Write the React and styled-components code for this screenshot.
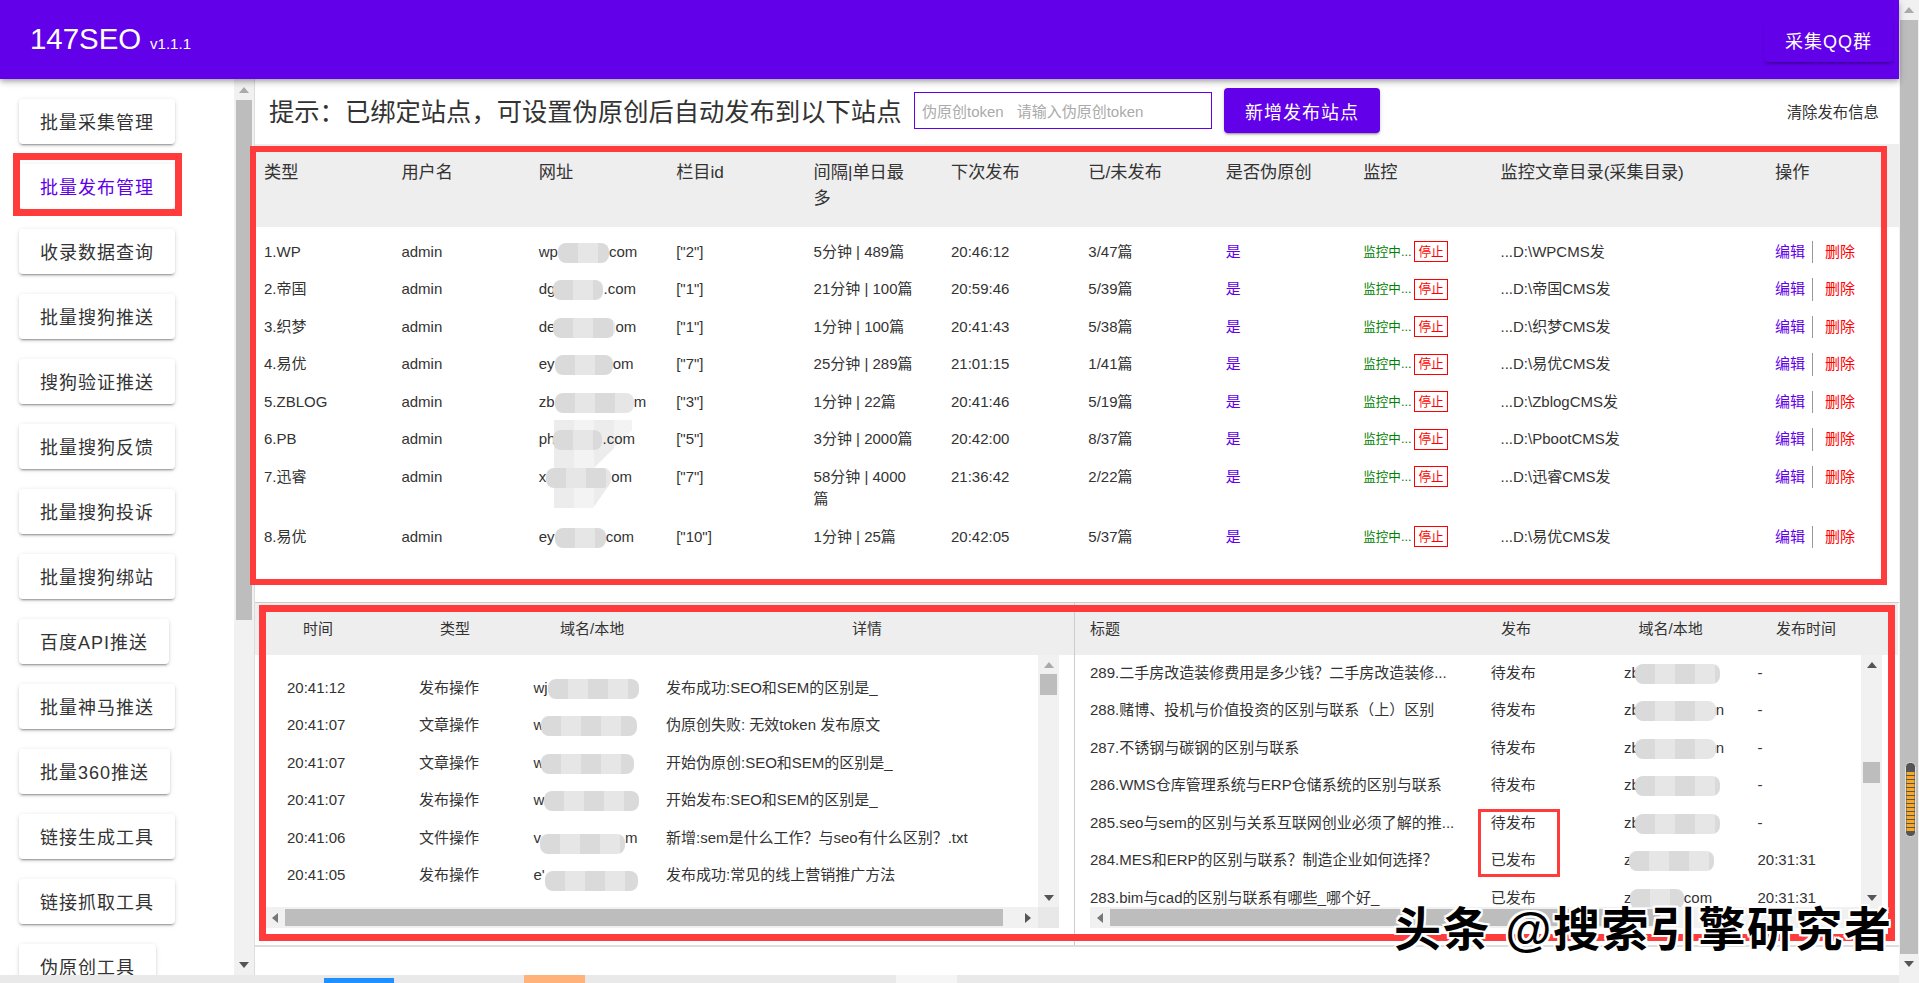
import React from "react";
import styled, { createGlobalStyle } from "styled-components";

const PURPLE = "#6200ea";
const RED = "#ff3b3b";
const TEXT = "#333";
const THUMB = "#bdbdbd";
const TRACK = "#f1f1f1";
const SITE_COLS = "repeat(9, 137.4px) 274.5px 1fr";

const Global = createGlobalStyle`
  html, body { margin: 0; padding: 0; height: 100%; overflow: hidden; background: #fff; }
  body { font-family: "Liberation Sans", "Noto Sans CJK SC", sans-serif; color: ${TEXT}; }
  * { box-sizing: border-box; }
`;

const Shell = styled.div`
  position: relative;
  display: flex;
  width: 1919px;
  height: 983px;
  overflow: hidden;
`;
const Page = styled.div`
  display: flex;
  flex-direction: column;
  width: 1899px;
  height: 983px;
`;
const Header = styled.header`
  position: relative;
  z-index: 3;
  display: flex;
  align-items: flex-start;
  justify-content: space-between;
  flex: none;
  height: 79px;
  padding: 20px 6px 0 30px;
  background: ${PURPLE};
  color: #fff;
  box-shadow: 0 2px 4px -1px rgba(0,0,0,.2), 0 4px 5px rgba(0,0,0,.14), 0 1px 10px rgba(0,0,0,.12);
`;
const Brand = styled.div`
  font-size: 29.4px;
  line-height: 38px;
`;
const Version = styled.small`
  margin-left: 9px;
  font-size: 15px;
`;
const QQButton = styled.div`
  display: flex;
  align-items: center;
  height: 42px;
  padding: 0 21px 3px;
  border-radius: 4px;
  font-size: 18px;
  letter-spacing: 1px;
  white-space: nowrap;
  box-shadow: 0 3px 3px -2px rgba(0,0,0,.3), 0 2px 3px rgba(0,0,0,.14);
`;
const Body = styled.div`
  display: flex;
  flex: none;
  height: 896px;
`;
const Sidebar = styled.nav`
  display: flex;
  flex: none;
  width: 255px;
  border-right: 1px solid #ddd;
`;
const SideList = styled.div`
  display: flex;
  flex-direction: column;
  align-items: flex-start;
  gap: 20px;
  width: 234px;
  padding: 20px 0 0 19px;
  overflow: hidden;
`;
const SideButton = styled.div`
  position: relative;
  flex: none;
  display: flex;
  align-items: center;
  height: 45px;
  padding: 0 21px 2px;
  border-radius: 4px;
  background: #fff;
  color: ${p => (p.$active ? PURPLE : TEXT)};
  font-size: 18px;
  letter-spacing: 1px;
  white-space: nowrap;
  box-shadow: 0 3px 1px -2px rgba(0,0,0,.2), 0 2px 2px rgba(0,0,0,.14), 0 1px 5px rgba(0,0,0,.12);
`;
const SideFrame = styled.span`
  position: absolute;
  inset: -11px -7px -7px -6px;
  border: 7px solid ${RED};
`;
const VBar = styled.div`
  display: flex;
  flex-direction: column;
  flex: none;
  width: ${p => p.$w || 20}px;
  background: ${TRACK};
`;
const ArrowBox = styled.div`
  display: flex;
  align-items: center;
  justify-content: center;
  flex: none;
  height: ${p => p.$h || 21}px;
`;
const ArrowUp = styled.i`
  width: 0; height: 0;
  border-left: 5px solid transparent;
  border-right: 5px solid transparent;
  border-bottom: 6px solid ${p => p.$c || "#666"};
`;
const ArrowDown = styled(ArrowUp)`
  border-bottom: 0;
  border-top: 6px solid ${p => p.$c || "#666"};
`;
const ArrowLeft = styled.i`
  width: 0; height: 0;
  border-top: 5px solid transparent;
  border-bottom: 5px solid transparent;
  border-right: 6px solid #777;
`;
const ArrowRight = styled.i`
  width: 0; height: 0;
  border-top: 5px solid transparent;
  border-bottom: 5px solid transparent;
  border-left: 6px solid #555;
`;
const VThumb = styled.div`
  flex: none;
  height: ${p => p.$h}px;
  margin: ${p => p.$top || 0}px ${p => p.$side || 2}px 0;
  background: ${THUMB};
`;
const VSpacer = styled.div`
  flex: 1;
`;
const Main = styled.main`
  position: relative;
  display: flex;
  flex-direction: column;
  flex: 1;
  min-width: 0;
`;
const Toolbar = styled.div`
  display: flex;
  align-items: center;
  flex: none;
  height: 67px;
  padding: 0 20px 2px 14px;
  border-bottom: 2px solid #eee;
`;
const Hint = styled.h2`
  margin: 0;
  width: 645px;
  font-size: 25.3px;
  font-weight: 400;
  line-height: 36px;
  white-space: nowrap;
  transform: translateY(1px);
`;
const TokenBox = styled.div`
  display: flex;
  align-items: center;
  gap: 13px;
  width: 298px;
  height: 37px;
  padding-left: 7px;
  border: 1px solid ${PURPLE};
  color: #aaa;
  font-size: 15px;
  white-space: nowrap;
`;
const AddButton = styled.div`
  display: flex;
  align-items: center;
  height: 45px;
  margin-left: 12px;
  padding: 0 21px;
  border-radius: 4px;
  background: ${PURPLE};
  color: #fff;
  font-size: 18px;
  letter-spacing: 1px;
  white-space: nowrap;
  box-shadow: 0 3px 1px -2px rgba(0,0,0,.2), 0 2px 2px rgba(0,0,0,.14), 0 1px 5px rgba(0,0,0,.12);
`;
const ClearLink = styled.div`
  margin-left: auto;
  font-size: 15.4px;
  white-space: nowrap;
`;
const SiteSection = styled.section`
  position: relative;
  flex: none;
  height: 456px;
  margin-left: 1px;
`;
const TableFrame = styled.div`
  position: absolute;
  z-index: 2;
  left: -6px;
  top: 0;
  width: 1637px;
  height: 439px;
  border: 6.5px solid ${RED};
  pointer-events: none;
`;
const SiteHead = styled.div`
  display: grid;
  grid-template-columns: ${SITE_COLS};
  height: 81px;
  padding: 13px 0 0 8px;
  background: #eee;
  font-size: 17.2px;
  line-height: 26px;
`;
const SiteRows = styled.div`
  position: relative;
  padding-top: 6px;
`;
const SiteRow = styled.div`
  position: relative;
  display: grid;
  grid-template-columns: ${SITE_COLS};
  padding: 7.5px 0 7.5px 8px;
  font-size: 15px;
  line-height: 22.5px;
`;
const Cell = styled.div`
  padding-right: 33.4px;
  white-space: ${p => (p.$wrap ? "normal" : "nowrap")};
`;
const Yes = styled.span`
  color: ${PURPLE};
`;
const Monitor = styled.div`
  display: flex;
  align-items: center;
  align-self: start;
  gap: 3px;
  height: 22.5px;
  color: #008000;
  font-size: 12.6px;
  white-space: nowrap;
`;
const StopBtn = styled.span`
  display: inline-flex;
  align-items: center;
  height: 21px;
  padding: 0 3px;
  border: 1px solid #f00;
  color: #f00;
  font-size: 12.6px;
`;
const Actions = styled.div`
  display: flex;
  align-items: center;
  height: 22.5px;
`;
const EditLink = styled.span`
  color: ${PURPLE};
  padding-right: 7px;
  border-right: 1px solid #999;
`;
const DeleteLink = styled.span`
  margin-left: 12px;
  color: #f00;
`;
const Blot = styled.span`
  display: inline-block;
  vertical-align: middle;
  width: ${p => p.$w}px;
  height: 20px;
  margin: -9px 0 -9px ${p => p.$ml || 0}px;
  border-radius: 8px;
  transform: translateY(${p => p.$dy || 0}px);
  background: repeating-linear-gradient(90deg, #dadada 0 20px, #e6e6e6 20px 40px);
`;
const Ghost = styled.div`
  position: absolute;
  left: 298px;
  top: 193px;
  width: 78px;
  height: 88px;
  background: repeating-linear-gradient(90deg, #ececec 0 20px, #f3f3f3 20px 40px);
  clip-path: polygon(0 0, 100% 0, 100% 12%, 45% 60%, 70% 75%, 50% 100%, 0 100%);
`;
const LogPanel = styled.section`
  position: relative;
  display: flex;
  flex: none;
  height: 345px;
  border-top: 1px solid #ccc;
  border-bottom: 2px solid #ddd;
`;
const LogFrame = styled.div`
  position: absolute;
  z-index: 2;
  left: 4px;
  top: 2px;
  width: 1636px;
  height: 336px;
  border: 7px solid ${RED};
  pointer-events: none;
`;
const Pane = styled.div`
  display: flex;
  flex-direction: column;
  flex: none;
  width: ${p => p.$w}px;
  border-right: ${p => (p.$rule ? "1px solid #ccc" : "0")};
`;
const PaneHead = styled.div`
  display: grid;
  grid-template-columns: ${p => p.$cols};
  align-items: center;
  flex: none;
  height: 52px;
  padding: 0 0 4px ${p => p.$pad}px;
  background: #eee;
  font-size: 15px;
`;
const PaneBody = styled.div`
  display: flex;
  flex: none;
  height: 252px;
  margin: 0 ${p => p.$mr}px 0 ${p => p.$ml}px;
  background: #fff;
`;
const RowList = styled.div`
  position: relative;
  flex: 1;
  min-width: 0;
  padding-top: ${p => p.$top}px;
  padding-left: ${p => p.$pad}px;
  overflow: hidden;
`;
const LogRow = styled.div`
  display: grid;
  grid-template-columns: ${p => p.$cols};
  align-items: center;
  height: 37.5px;
  padding-bottom: 2px;
  font-size: 15px;
  line-height: 22.5px;
  white-space: nowrap;
`;
const HBar = styled.div`
  display: flex;
  align-items: stretch;
  flex: none;
  height: 21px;
  margin: 0 ${p => p.$mr}px 0 ${p => p.$ml}px;
  background: ${TRACK};
`;
const HArrow = styled.div`
  display: flex;
  align-items: center;
  justify-content: center;
  flex: none;
  width: 20px;
`;
const HThumb = styled.div`
  flex: none;
  width: ${p => p.$w}px;
  margin: 2px 0;
  background: ${THUMB};
`;
const HSpacer = styled.div`
  flex: 1;
`;
const Corner = styled.div`
  flex: none;
  width: 21px;
  background: #e8e8e8;
`;
const StatusFrame = styled.div`
  position: absolute;
  left: 403px;
  top: 154px;
  width: 82px;
  height: 68px;
  border: 3px solid ${RED};
`;
const TaskStrip = styled.div`
  display: flex;
  align-items: flex-end;
  flex: none;
  height: 8px;
  background: #e9e9e9;
`;
const StripPart = styled.span`
  flex: none;
  width: ${p => p.$w}px;
  height: ${p => p.$h}px;
  margin-left: ${p => p.$ml}px;
  background: ${p => p.$c};
`;
const PageBar = styled.aside`
  position: relative;
  display: flex;
  flex-direction: column;
  flex: none;
  width: 20px;
  height: 983px;
  background: ${TRACK};
`;
const Grip = styled.svg`
  position: absolute;
  left: 6px;
  top: 762px;
`;
const Watermark = styled.div`
  position: absolute;
  z-index: 5;
  left: 1394px;
  top: 900px;
  color: #000;
  font-size: 47px;
  letter-spacing: 1.5px;
  line-height: 60px;
  font-weight: 700;
  white-space: nowrap;
  text-shadow: 2px 0 0 #fff, -2px 0 0 #fff, 0 2px 0 #fff, 0 -2px 0 #fff, 2px 2px 0 #fff, -2px -2px 0 #fff, 2px -2px 0 #fff, -2px 2px 0 #fff;
`;

const menu = ["批量采集管理","批量发布管理","收录数据查询","批量搜狗推送","搜狗验证推送","批量搜狗反馈","批量搜狗投诉","批量搜狗绑站","百度API推送","批量神马推送","批量360推送","链接生成工具","链接抓取工具","伪原创工具"];
const siteHead = ["类型","用户名","网址","栏目id","间隔|单日最多","下次发布","已/未发布","是否伪原创","监控","监控文章目录(采集目录)","操作"];
const sites = [
  ["1.WP","wp",0,51,"com",'["2"]',"5分钟 | 489篇","20:46:12","3/47篇","...D:\\WPCMS发"],
  ["2.帝国","dg",-2,50,".com",'["1"]',"21分钟 | 100篇","20:59:46","5/39篇","...D:\\帝国CMS发"],
  ["3.织梦","de",-2,62,"om",'["1"]',"1分钟 | 100篇","20:41:43","5/38篇","...D:\\织梦CMS发"],
  ["4.易优","ey",0,58,"om",'["7"]',"25分钟 | 289篇","21:01:15","1/41篇","...D:\\易优CMS发"],
  ["5.ZBLOG","zb",0,79,"m",'["3"]',"1分钟 | 22篇","20:41:46","5/19篇","...D:\\ZblogCMS发"],
  ["6.PB","ph",-2,49,".com",'["5"]',"3分钟 | 2000篇","20:42:00","8/37篇","...D:\\PbootCMS发"],
  ["7.迅睿","x",0,65,"om",'["7"]',"58分钟 | 4000篇","21:36:42","2/22篇","...D:\\迅睿CMS发"],
  ["8.易优","ey",0,51,"com",'["10"]',"1分钟 | 25篇","20:42:05","5/37篇","...D:\\易优CMS发"],
];
const leftCols = "132px 114.5px 132.5px 1fr";
const leftHeadCols = "137px 120px 292px 1fr";
const logs = [
  ["20:41:12","发布操作","wj",0,91,"",0,"发布成功:SEO和SEM的区别是_"],
  ["20:41:07","文章操作","w",-3,96,"",0,"伪原创失败: 无效token 发布原文"],
  ["20:41:07","文章操作","w",-3,93,"",0,"开始伪原创:SEO和SEM的区别是_"],
  ["20:41:07","发布操作","w",0,95,"",0,"开始发布:SEO和SEM的区别是_"],
  ["20:41:06","文件操作","v",-1,85,"m",5,"新增:sem是什么工作？与seo有什么区别？.txt"],
  ["20:41:05","发布操作","e'",0,93,"",5,"发布成功:常见的线上营销推广方法"],
];
const rightCols = "400.7px 133.3px 133.5px 1fr";
const rightHeadCols = "411px 137.5px 137.5px 1fr";
const posts = [
  ["289.二手房改造装修费用是多少钱？二手房改造装修...","待发布","zb",85,"","-"],
  ["288.赌博、投机与价值投资的区别与联系（上）区别","待发布","zb",81,"n","-"],
  ["287.不锈钢与碳钢的区别与联系","待发布","zb",81,"n","-"],
  ["286.WMS仓库管理系统与ERP仓储系统的区别与联系","待发布","zb",85,"","-"],
  ["285.seo与sem的区别与关系互联网创业必须了解的推...","待发布","zb",85,"","-"],
  ["284.MES和ERP的区别与联系？制造企业如何选择？","已发布","z'",85,"","20:31:31"],
  ["283.bim与cad的区别与联系有哪些_哪个好_","已发布","zl",54,"com","20:31:31"],
];

function Stripes() {
  const ys = Array.from({ length: 15 }, (_, i) => 10 + i * 4);
  return (
    <Grip width="11" height="75" viewBox="0 0 11 75">
      <rect x="0.5" y="0.5" width="10" height="74" rx="4" fill="#555" stroke="#ddd" />
      {ys.map(y => <rect key={y} x="1.5" y={y} width="8" height="3" fill="#f9a825" />)}
    </Grip>
  );
}

export default function App() {
  return (
    <Shell>
      <Global />
      <Page>
        <Header>
          <Brand>147SEO<Version>v1.1.1</Version></Brand>
          <QQButton>采集QQ群</QQButton>
        </Header>
        <Body>
          <Sidebar>
            <SideList>
              {menu.map((m, i) => (
                <SideButton key={m} $active={i === 1}>{m}{i === 1 && <SideFrame />}</SideButton>
              ))}
            </SideList>
            <VBar>
              <ArrowBox><ArrowUp $c="#aaa" /></ArrowBox>
              <VThumb $h={520} />
              <VSpacer />
              <ArrowBox><ArrowDown $c="#555" /></ArrowBox>
            </VBar>
          </Sidebar>
          <Main>
            <Toolbar>
              <Hint>提示：已绑定站点，可设置伪原创后自动发布到以下站点</Hint>
              <TokenBox><span>伪原创token</span><span>请输入伪原创token</span></TokenBox>
              <AddButton>新增发布站点</AddButton>
              <ClearLink>清除发布信息</ClearLink>
            </Toolbar>
            <SiteSection>
              <TableFrame />
              <SiteHead>
                {siteHead.map(h => <Cell key={h} $wrap>{h}</Cell>)}
              </SiteHead>
              <SiteRows>
                <Ghost />
                {sites.map(s => (
                  <SiteRow key={s[0]}>
                    <Cell>{s[0]}</Cell>
                    <Cell>admin</Cell>
                    <Cell>{s[1]}<Blot $ml={s[2]} $w={s[3]} />{s[4]}</Cell>
                    <Cell>{s[5]}</Cell>
                    <Cell $wrap>{s[6]}</Cell>
                    <Cell>{s[7]}</Cell>
                    <Cell>{s[8]}</Cell>
                    <Cell><Yes>是</Yes></Cell>
                    <Monitor><span>监控中...</span><StopBtn>停止</StopBtn></Monitor>
                    <Cell>{s[9]}</Cell>
                    <Actions><EditLink>编辑</EditLink><DeleteLink>删除</DeleteLink></Actions>
                  </SiteRow>
                ))}
              </SiteRows>
            </SiteSection>
            <LogPanel>
              <LogFrame />
              <Pane $w={820} $rule>
                <PaneHead $cols={leftHeadCols} $pad={48}>
                  <span>时间</span><span>类型</span><span>域名/本地</span><span>详情</span>
                </PaneHead>
                <PaneBody $ml={10} $mr={15}>
                  <RowList $top={15} $pad={22}>
                    {logs.map((l, i) => (
                      <LogRow key={i} $cols={leftCols}>
                        <span>{l[0]}</span>
                        <span>{l[1]}</span>
                        <span>{l[2]}<Blot $ml={l[3]} $w={l[4]} $dy={l[6]} />{l[5]}</span>
                        <span>{l[7]}</span>
                      </LogRow>
                    ))}
                  </RowList>
                  <VBar $w={21}>
                    <ArrowBox $h={19}><ArrowUp $c="#aaa" /></ArrowBox>
                    <VThumb $h={21} />
                    <VSpacer />
                    <ArrowBox $h={19}><ArrowDown $c="#555" /></ArrowBox>
                  </VBar>
                </PaneBody>
                <HBar $ml={10} $mr={15}>
                  <HArrow><ArrowLeft /></HArrow>
                  <HThumb $w={718} />
                  <HSpacer />
                  <HArrow><ArrowRight /></HArrow>
                  <Corner />
                </HBar>
              </Pane>
              <Pane $w={823}>
                <PaneHead $cols={rightHeadCols} $pad={15}>
                  <span>标题</span><span>发布</span><span>域名/本地</span><span>发布时间</span>
                </PaneHead>
                <PaneBody $ml={0} $mr={16}>
                  <RowList $top={0} $pad={15}>
                    <StatusFrame />
                    {posts.map(p => (
                      <LogRow key={p[0]} $cols={rightCols}>
                        <span>{p[0]}</span>
                        <span>{p[1]}</span>
                        <span>{p[2]}<Blot $ml={-5} $w={p[3]} />{p[4]}</span>
                        <span>{p[5]}</span>
                      </LogRow>
                    ))}
                  </RowList>
                  <VBar $w={21}>
                    <ArrowBox $h={19}><ArrowUp $c="#555" /></ArrowBox>
                    <VThumb $h={21} $top={88} />
                    <VSpacer />
                    <ArrowBox $h={19}><ArrowDown $c="#555" /></ArrowBox>
                  </VBar>
                </PaneBody>
                <HBar $ml={15} $mr={16}>
                  <HArrow><ArrowLeft /></HArrow>
                  <HThumb $w={550} />
                  <HSpacer />
                  <HArrow><ArrowRight /></HArrow>
                </HBar>
              </Pane>
            </LogPanel>
          </Main>
        </Body>
        <TaskStrip>
          <StripPart $ml={324} $w={70} $h={5} $c="#1e90ff" />
          <StripPart $ml={130} $w={61} $h={8} $c="#ffb27a" />
          <StripPart $ml={311} $w={61} $h={8} $c="#f5f5f5" />
        </TaskStrip>
      </Page>
      <PageBar>
        <ArrowBox $h={20}><ArrowUp $c="#aaa" /></ArrowBox>
        <VThumb $h={934} $side={1} />
        <ArrowBox $h={20}><ArrowDown $c="#555" /></ArrowBox>
        <Stripes />
      </PageBar>
      <Watermark>头条 @搜索引擎研究者</Watermark>
    </Shell>
  );
}
